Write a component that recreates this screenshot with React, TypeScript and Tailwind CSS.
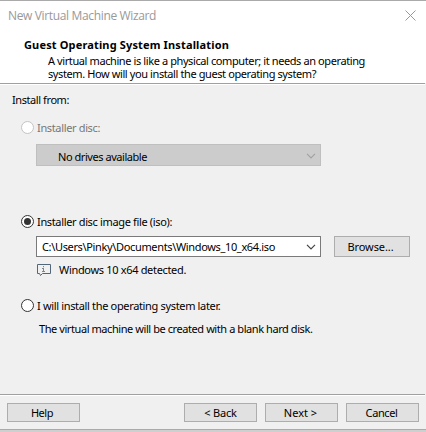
import type { ReactNode } from "react";

function Chevron({ className }: { className: string }) {
  return (
    <svg className={className} width="10" height="6" viewBox="0 0 10 6" fill="none" stroke="currentColor" strokeWidth="1.2">
      <path d="M1 .8 5 4.8 9 .8" />
    </svg>
  );
}

function Button({ className, children }: { className: string; children: ReactNode }) {
  return (
    <button type="button" className={`flex items-center justify-center border border-[#adadad] bg-[#e1e1e1] whitespace-pre ${className}`}>
      {children}
    </button>
  );
}

function Radio({ checked = false, disabled = false }: { checked?: boolean; disabled?: boolean }) {
  return (
    <span className={`flex size-[13px] shrink-0 items-center justify-center rounded-full border bg-white ${disabled ? "border-[#c4c4c4]" : "border-[#333]"}`}>
      {checked && <span className="size-[7px] rounded-full bg-[#333]" />}
    </span>
  );
}

export default function App() {
  return (
    <div className="flex h-[432px] w-[426px] flex-col overflow-hidden bg-[#cfcfcf] font-['Noto_Sans','Liberation_Sans',sans-serif] text-[11px] leading-[13px] whitespace-nowrap text-black">
      <div className="flex h-[430px] flex-col border-t border-b border-[#aaaaaa] bg-[#f0f0f0]">
        <div className="flex h-[82px] shrink-0 flex-col bg-white">
          <div className="flex h-[29px] items-center justify-between pr-[10px] pl-2">
            <span className="font-['Open_Sans','Noto_Sans',sans-serif] text-[12px] tracking-[-0.35px] text-[#999]">New Virtual Machine Wizard</span>
            <svg width="11" height="11" viewBox="0 0 11 11" stroke="#999" strokeWidth="1">
              <path d="M.5.5l10 10M10.500.5l-10 10" />
            </svg>
          </div>
          <h1 className="mt-[8px] pl-6 font-bold tracking-[0.15px]">Guest Operating System Installation</h1>
          <p className="mt-[3px] pl-12 tracking-[-0.4px]">
            A virtual machine is like a physical computer; it needs an operating
            <br />
            system. How will you install the guest operating system?
          </p>
        </div>
        <div className="mr-px h-[2px] shrink-0 border-t border-b border-t-[#a0a0a0] border-b-white" />

        <div className="flex h-[309px] shrink-0 flex-col">
          <p className="mt-[8px] pl-3 tracking-[-0.42px]">Install from:</p>
          <div className="mt-[14px] flex h-[14px] items-center gap-[3px] pl-[21px] text-[#777]">
            <Radio disabled />
            <span className="tracking-[-0.35px]">Installer disc:</span>
          </div>
          <div className="mt-[10px] ml-9 flex h-[22px] w-[285px] items-center justify-between border border-[#bfbfbf] bg-[#cccccc] pr-1 pl-[21px]">
            <span className="pt-[2px] tracking-[-0.45px]">No drives available</span>
            <Chevron className="mt-px text-[#a3a3a3]" />
          </div>
          <div className="mt-[48px] flex h-[14px] items-center gap-[3px] pl-[21px]">
            <Radio checked />
            <span className="tracking-[-0.35px]">Installer disc image file (iso):</span>
          </div>
          <div className="mt-[8px] flex gap-[13px] pl-9">
            <div className="flex h-[21px] w-[285px] items-center justify-between border border-[#7a7a7a] bg-white pr-1 pl-[5px]">
              <span className="tracking-[-0.35px]">C:\Users\Pinky\Documents\Windows_10_x64.iso</span>
              <Chevron className="text-[#444]" />
            </div>
            <Button className="h-[21px] w-[76px] pr-[3px] tracking-[-0.09px]">Browse...</Button>
          </div>
          <div className="mt-[5px] flex h-[14px] items-center gap-2 pl-[37px]">
            <svg className="mt-px" width="14" height="13" viewBox="0 0 14 13" fill="none" stroke="#53677a" strokeWidth="1">
              <path d="M.5 1.500h13v9H5.500L3.500 12.500 2.500 10.500h-2z" />
              <path d="M6.500 3v1.200M6.500 5v4M5 5.500h1.500M5 8.500h3" stroke="#7e8790" />
            </svg>
            <span className="tracking-[-0.325px]">Windows 10 x64 detected.</span>
          </div>
          <div className="mt-[22px] flex h-[14px] items-center gap-[3px] pl-[21px]">
            <Radio />
            <span className="tracking-[-0.34px]">I will install the operating system later.</span>
          </div>
          <p className="mt-[10px] pl-[39px] tracking-[-0.425px]">The virtual machine will be created with a blank hard disk.</p>
        </div>
        <div className="mr-px h-[2px] shrink-0 border-t border-b border-t-[#a0a0a0] border-b-white" />

        <div className="flex pt-[7px] pl-[7px]">
          <Button className="h-[19px] w-[73px] pr-[3px] tracking-[-0.45px]">Help</Button>
          <Button className="ml-[104px] h-[19px] w-[73px] tracking-[-0.2px]">{"< Back"}</Button>
          <Button className="ml-2 h-[19px] w-[73px] pr-[2px]">{"Next >"}</Button>
          <Button className="ml-2 h-[19px] w-[73px] pr-[2px] tracking-[-0.4px]">Cancel</Button>
        </div>
      </div>
    </div>
  );
}
